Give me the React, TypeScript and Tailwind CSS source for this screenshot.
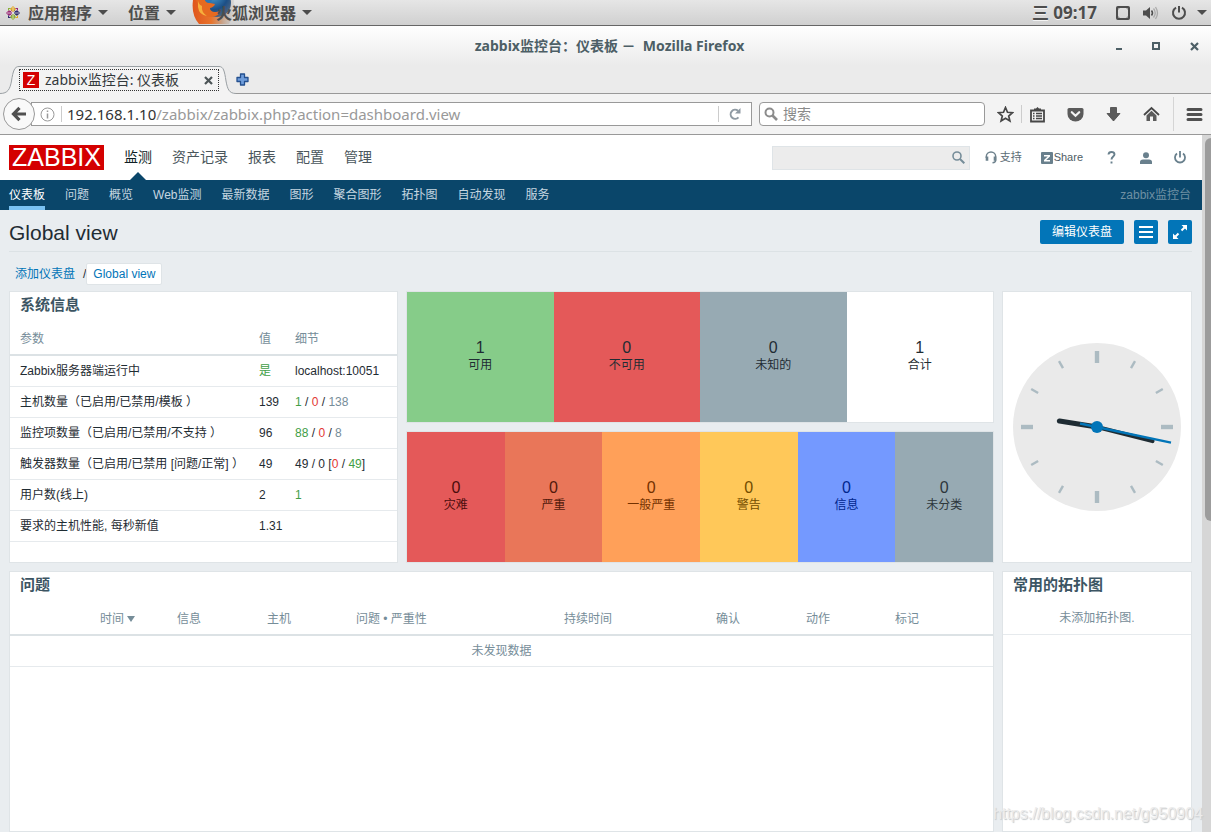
import type { ReactNode } from 'react';

const topMenus = ['资产记录', '报表', '配置', '管理'];
const subMenus = ['问题', '概览', 'Web监测', '最新数据', '图形', '聚合图形', '拓扑图', '自动发现', '服务'];

const hosts = [
  { count: 1, label: '可用', cls: 'bg-[#86cc89]' },
  { count: 0, label: '不可用', cls: 'bg-[#e45959]' },
  { count: 0, label: '未知的', cls: 'bg-[#97aab3]' },
  { count: 1, label: '合计', cls: 'bg-white' },
];

const severities = [
  { count: 0, label: '灾难', cls: 'bg-[#e45959] text-[#4b0c0c]' },
  { count: 0, label: '严重', cls: 'bg-[#e97659] text-[#52190b]' },
  { count: 0, label: '一般严重', cls: 'bg-[#ffa059] text-[#733100]' },
  { count: 0, label: '警告', cls: 'bg-[#ffc859] text-[#734d00]' },
  { count: 0, label: '信息', cls: 'bg-[#7499ff] text-[#00268e]' },
  { count: 0, label: '未分类', cls: 'bg-[#97aab3] text-[#2d363b]' },
];

export default function App() {
  return (
    <div className="flex h-screen flex-col overflow-hidden bg-[#f3f3f3] font-['Noto_Sans','Noto_Sans_CJK_SC',sans-serif]">
      <DesktopBar />
      <TitleBar />
      <TabStrip />
      <Toolbar />
      <div className="relative flex min-h-0 flex-1 bg-[#e9edf0] font-['Liberation_Sans','Noto_Sans_CJK_SC',sans-serif] text-xs text-[#1f2c33]">
        <div className="flex min-w-0 flex-1 flex-col">
          <SiteHeader />
          <SubNav />
          <Dashboard />
        </div>
        <div className="w-[9px] shrink-0 bg-[#d6d6d6] pt-[3px] pl-[3px]">
          <div className="h-[383px] rounded-l-full bg-[#9c9c9c]" />
        </div>
        <div className="pointer-events-none absolute right-2 bottom-2 text-base leading-5 text-[#ececec] [text-shadow:1px_1px_1px_#c4c8ca]">
          https://blog.csdn.net/g950904
        </div>
      </div>
    </div>
  );
}

function DesktopBar() {
  return (
    <div className="flex h-[26px] shrink-0 items-center overflow-hidden border-b border-[#666] bg-linear-to-b from-[#e6e6e6] to-[#d0d0d0] pr-1 pl-1.5 text-base leading-6 font-bold text-[#4d4d4d] [text-shadow:0_1px_0_#f4f4f4]">
      <button className="flex items-center">
        <CentosIcon />
        <span className="ml-2">应用程序</span>
        <Caret cls="ml-1.5" />
      </button>
      <button className="ml-5 flex items-center">
        位置
        <Caret cls="ml-1.5" />
      </button>
      <button className="ml-4 flex items-center">
        <FirefoxIcon />
        <span className="-ml-5">火狐浏览器</span>
        <Caret cls="ml-1.5" />
      </button>
      <div className="ml-auto flex items-center">
        <span className="text-[17px]">三 09:17</span>
        <svg className="ml-[18px]" width="16" height="16" viewBox="0 0 16 16" fill="none" stroke="#4d4d4d">
          <rect x="2" y="2" width="12" height="12" rx="1" strokeWidth="2" />
          <path d="M2.5 5V2.5H5M11 2.5h2.500V5M2.500 11v2.500H5M11 13.500h2.500V11" strokeWidth="1.500" />
        </svg>
        <svg className="ml-[11px]" width="17" height="16" viewBox="0 0 17 16" fill="none">
          <path d="M1 5.500h3L8 2v12L4 10.500H1z" fill="#4d4d4d" />
          <path d="M9.500 5.500q2 2.500 0 5" stroke="#4d4d4d" strokeWidth="1.500" />
          <path d="M11.500 3.500q3.500 4.500 0 9M13.500 2q4 6 0 12" stroke="#aaa" strokeWidth="1.300" />
        </svg>
        <svg className="ml-3" width="16" height="16" viewBox="0 0 16 16" fill="none" stroke="#4d4d4d" strokeWidth="2">
          <path d="M8 1v6.500M5 2.600a6 6 0 1 0 6 0" />
        </svg>
        <Caret cls="ml-2.5" />
      </div>
    </div>
  );
}

function TitleBar() {
  return (
    <div className="flex h-10 shrink-0 items-center bg-linear-to-b from-white to-[#ebebeb] text-[#4d5f66]">
      <div className="w-[95px]" />
      <div className="flex-1 pl-2 text-center text-sm leading-5 font-bold whitespace-pre">zabbix监控台：仪表板 －  Mozilla Firefox</div>
      <div className="flex w-[95px] items-center justify-between pr-3">
        <button aria-label="最小化" className="flex h-2 w-1.5 items-end"><i className="block h-0.5 w-full bg-[#4d5f66]" /></button>
        <button aria-label="最大化" className="size-2 border-2 border-[#4d5f66]" />
        <button aria-label="关闭">
          <svg width="9" height="9" viewBox="0 0 9 9" stroke="#4d5f66" strokeWidth="2.200"><path d="M1 1l7 7M8 1L1 8" /></svg>
        </button>
      </div>
    </div>
  );
}

function TabStrip() {
  return (
    <div className="flex h-7 shrink-0 bg-[#ebebeb]">
      <svg width="19" height="28" viewBox="0 0 19 28" className="shrink-0">
        <path d="M0 27.500C8 27.500 10 23 11.500 15C13 5 14.500 0.500 19 0.500V28H0Z" fill="#f3f3f3" />
        <path d="M0 27.500C8 27.500 10 23 11.500 15C13 5 14.500 0.500 19 0.500" fill="none" stroke="#999fa3" />
      </svg>
      <div className="w-[200px] border-t border-[#999fa3] bg-[#f3f3f3] pt-0.5">
        <div className="flex h-[22px] items-center border border-dotted border-[#333] px-[3px] text-sm text-[#33393c]">
          <span className="flex size-4 items-center justify-center bg-[#d40000] font-['Liberation_Sans',sans-serif] text-sm text-white">Z</span>
          <span className="ml-1.5 flex-1 leading-5 whitespace-nowrap">zabbix监控台: 仪表板</span>
          <button aria-label="关闭标签页" className="mr-0.5">
            <svg width="9" height="9" viewBox="0 0 9 9" stroke="#4d5557" strokeWidth="2.200"><path d="M1 1l7 7M8 1L1 8" /></svg>
          </button>
        </div>
      </div>
      <svg width="17" height="28" viewBox="0 0 17 28" className="shrink-0">
        <path d="M0 0.500C4.500 0.500 5.500 5 7 15C8.500 23 10 27.500 17 27.500V28H0Z" fill="#f3f3f3" />
        <path d="M0 0.500C4.500 0.500 5.500 5 7 15C8.500 23 10 27.500 17 27.500" fill="none" stroke="#999fa3" />
      </svg>
      <div className="flex flex-1 items-center border-b border-[#999]">
        <button aria-label="打开新标签页">
          <svg width="13" height="13" viewBox="0 0 13 13">
            <path d="M4.500 1h4v3.500H12v4H8.500V12h-4V8.500H1v-4h3.500z" fill="#6f9ddb" stroke="#24508f" strokeWidth="1.300" strokeLinejoin="round" />
          </svg>
        </button>
      </div>
    </div>
  );
}

function Toolbar() {
  return (
    <div className="flex h-[41px] shrink-0 items-center border-b border-[#999] pl-[3px] text-sm">
      <button aria-label="后退" className="z-10 flex size-8 shrink-0 items-center justify-center rounded-full border border-[#999] bg-[#f9f9f9]">
        <svg width="16" height="16" viewBox="0 0 16 16" fill="none" stroke="#505050" strokeWidth="3.200"><path d="M2.500 8H15M8.500 1.800L2.500 8l6 6.200" /></svg>
      </button>
      <div className="-ml-1 flex h-6 min-w-0 flex-1 items-center border border-[#999] bg-white pl-2">
        <svg className="shrink-0" width="15" height="15" viewBox="0 0 15 15" fill="none" stroke="#999">
          <circle cx="7.500" cy="7.500" r="6.500" /><path d="M7.500 6.500v5M7.500 3.500V5" strokeWidth="1.500" />
        </svg>
        <span className="ml-1.5 h-4 w-px bg-[#ccc]" />
        <span className="ml-[5px] flex-1 text-[15px] leading-5 text-[#999]">
          <span className="text-[#333]">192.168.1.10</span>/zabbix/zabbix.php?action=dashboard.view
        </span>
        <span className="h-4 w-px bg-[#ccc]" />
        <button aria-label="重新载入" className="px-2.5">
          <svg width="12" height="12" viewBox="0 0 12 12" fill="none">
            <path d="M9.500 9.300A4.500 4.500 0 1 1 9 2.800" stroke="#8f9aa3" strokeWidth="2" /><path d="M11.500 0v5.500H6z" fill="#8f9aa3" />
          </svg>
        </button>
      </div>
      <label className="ml-[7px] flex h-6 w-[226px] items-center rounded-sm border border-[#999] bg-white pl-1">
        <svg width="14" height="14" viewBox="0 0 14 14" fill="none" stroke="#8c8c8c"><circle cx="5.500" cy="5.500" r="4" strokeWidth="2" /><path d="M8.500 8.500l4.500 4.500" strokeWidth="2.600" /></svg>
        <input aria-label="搜索" placeholder="搜索" className="ml-[5px] w-0 flex-1 leading-5 outline-none placeholder:text-[#8a8a8a]" />
      </label>
      <div className="flex items-center pl-3">
        <IconButton label="加为书签">
          <path d="M8.500 1.500l2 4.800 5 .4-3.800 3.300 1.200 5-4.400-2.700L4.100 15l1.200-5L1.500 6.700l5-.4z" fill="none" stroke="#474747" strokeWidth="1.700" />
        </IconButton>
        <span className="mx-[7px] h-[18px] w-px bg-[#ccc]" />
        <IconButton label="书签">
          <path d="M2 4.500h13v11H2z" fill="none" stroke="#474747" strokeWidth="1.800" />
          <path d="M5 2.500h2L8.500 1 10 2.500h2V5H5z" fill="#474747" />
          <path d="M4 7.500h1.500M7 7.500h6M4 10h1.500M7 10h6M4 12.500h1.500M7 12.500h6" stroke="#474747" strokeWidth="1.300" />
        </IconButton>
        <span className="w-[21px]" />
        <IconButton label="Pocket">
          <path d="M2 2h13q1.500 0 1.500 1.500V8a8 7.500 0 0 1-16 0V3.500Q.5 2 2 2z" fill="#5b5b5b" />
          <path d="M4.800 6.200l3.700 3.600 3.700-3.600" fill="none" stroke="#f3f3f3" strokeWidth="2.200" strokeLinecap="round" />
        </IconButton>
        <span className="w-[21px]" />
        <IconButton label="下载">
          <path d="M5.500 1.500h6v6H15L8.500 15 2 7.500h3.500z" fill="#5b5b5b" stroke="#474747" strokeWidth=".8" />
        </IconButton>
        <span className="w-[21px]" />
        <IconButton label="主页">
          <path d="M1 9l7.500-7L16 9" fill="none" stroke="#474747" strokeWidth="1.800" />
          <path d="M3.500 9.500l5-4.700 5 4.700V15H10v-4.500H7V15H3.500z" fill="#5b5b5b" />
        </IconButton>
        <span className="mr-3 ml-[13px] h-[34px] w-px bg-[#d5d5d5]" />
        <IconButton label="菜单">
          <path d="M2 3.500h13M2 8.500h13M2 13.500h13" stroke="#505050" strokeWidth="3" strokeLinecap="round" />
        </IconButton>
        <span className="w-2" />
      </div>
    </div>
  );
}

function IconButton({ label, children }: { label: string; children: ReactNode }) {
  return (
    <button aria-label={label} className="shrink-0">
      <svg width="17" height="17" viewBox="0 0 17 17">{children}</svg>
    </button>
  );
}

function SiteHeader() {
  return (
    <header className="flex h-[45px] shrink-0 items-center bg-white pr-4 pl-[9px]">
      <a href="#" className="flex h-[25px] w-[95px] items-center justify-center bg-[#d40000] text-[25px] leading-[25px] text-white">ZABBIX</a>
      <nav className="ml-5 flex gap-5 self-stretch text-sm leading-[45px] text-[#4a565c]">
        <a href="#" className="relative text-[#0f1f26]">
          监测
          <svg className="absolute bottom-0 left-1.5" width="16" height="8" viewBox="0 0 16 8"><path d="M0 8l8-8 8 8z" fill="#0a466a" /></svg>
        </a>
        {topMenus.map((m) => <a key={m} href="#">{m}</a>)}
      </nav>
      <label className="ml-auto flex h-6 w-[198px] items-center border border-[#dfe4e7] bg-[#ececec] pr-1">
        <input aria-label="搜索主机" className="w-0 flex-1 px-1 outline-none" />
        <svg width="13" height="13" viewBox="0 0 13 13" fill="none" stroke="#768d99"><circle cx="5" cy="5" r="4" strokeWidth="1.600" /><path d="M8 8l4.300 4.300" strokeWidth="2" /></svg>
      </label>
      <a href="#" className="ml-[15px] flex items-center gap-[3px] text-[11px] text-[#5c6c75]">
        <svg width="12" height="13" viewBox="0 0 12 13" fill="none" stroke="#6e828d">
          <path d="M1.300 7V5.500a4.700 4.500 0 0 1 9.400 0V9q0 2.500-3.200 2.800" strokeWidth="1.400" />
          <path d="M2 5.500v4.200M10 5.500v4.200" strokeWidth="2.600" />
        </svg>
        支持
      </a>
      <a href="#" className="ml-[19px] flex items-center text-[11px] text-[#4f5d65]">
        <svg className="mr-px" width="12" height="12" viewBox="0 0 12 12"><rect width="12" height="12" rx="1" fill="#69808d" /><path d="M3 3h6v1.400L5.200 8H9v1.500H3V8.100l3.800-3.600H3z" fill="#fff" /></svg>
        Share
      </a>
      <a href="#" aria-label="帮助" className="ml-6">
        <svg width="9" height="13" viewBox="0 0 9 13" fill="none" stroke="#69808d" strokeWidth="1.900"><path d="M1.500 3.500Q1.700 1 4.500 1t3 2.300C7.500 5.500 4.500 5.500 4.500 8.500M4.500 10.500v2" /></svg>
      </a>
      <a href="#" aria-label="用户" className="ml-6">
        <svg width="12" height="12" viewBox="0 0 12 12" fill="#69808d"><circle cx="6" cy="3.300" r="3" /><path d="M0 12V9.800q0-2 3-2.300h6q3 .3 3 2.300V12z" /></svg>
      </a>
      <a href="#" aria-label="退出" className="ml-[22px]">
        <svg width="12" height="13" viewBox="0 0 12 13" fill="none" stroke="#69808d" strokeWidth="1.800"><path d="M6 0v6.500M3 2.500a5 5 0 1 0 6 0" /></svg>
      </a>
    </header>
  );
}

function SubNav() {
  return (
    <nav className="flex h-[30px] shrink-0 gap-5 bg-[#0a466a] pr-[11px] pl-[9px] leading-[30px] text-[#c6d6e0]">
      <a href="#" className="relative text-white">
        仪表板
        <i className="absolute inset-x-0 bottom-0 h-1 bg-[#7ac2f2]" />
      </a>
      {subMenus.map((m) => <a key={m} href="#">{m}</a>)}
      <span className="ml-auto text-[#6f90a3]">zabbix监控台</span>
    </nav>
  );
}

function Dashboard() {
  return (
    <main className="flex min-h-0 flex-1 flex-col pr-2.5 pl-[9px]">
      <div className="flex h-[42px] shrink-0 items-center border-b border-[#dce2e5] pt-1.5">
        <h1 className="flex-1 pb-0.5 text-[21px] leading-7">Global view</h1>
        <div className="flex gap-2.5 pb-1">
          <button className="h-6 w-[84px] rounded-xs bg-[#0275b8] text-white">编辑仪表盘</button>
          <button aria-label="操作" className="flex size-6 items-center justify-center rounded-xs bg-[#0275b8]">
            <svg width="14" height="12" viewBox="0 0 14 12" stroke="#fff" strokeWidth="2"><path d="M0 1h14M0 6h14M0 11h14" /></svg>
          </button>
          <button aria-label="全屏" className="flex size-6 items-center justify-center rounded-xs bg-[#0275b8]">
            <svg width="14" height="14" viewBox="0 0 14 14" fill="#fff" stroke="#fff"><path d="M8.500 5.500l3-3M5.500 8.500l-3 3" strokeWidth="2" /><path d="M8.500 0H14v5.500zM0 8.500V14h5.500z" stroke="none" /></svg>
          </button>
        </div>
      </div>
      <div className="mt-[11px] mb-1.5 flex h-[22px] shrink-0 items-center pl-1.5">
        <a href="#" className="text-[#0275b8]">添加仪表盘</a>
        <span className="ml-2">/</span>
        <a href="#" className="flex h-full items-center rounded-xs border border-[#dfe4e7] bg-white px-1.5 text-[#0275b8]">Global view</a>
      </div>
      <div className="grid min-h-0 flex-1 grid-cols-[389fr_588fr_190fr] grid-rows-[272px_minmax(0,1fr)] gap-2">
        <Widget title="系统信息"><SystemInfo /></Widget>
        <div className="grid grid-rows-2 gap-2">
          <div className="grid grid-cols-4 border border-[#dfe4e7]">
            {hosts.map((h) => <Tile key={h.label} {...h} />)}
          </div>
          <div className="grid grid-cols-6 border border-[#dfe4e7]">
            {severities.map((s) => <Tile key={s.label} {...s} />)}
          </div>
        </div>
        <section className="flex items-center justify-center border border-[#dfe4e7] bg-white"><Clock /></section>
        <div className="col-span-2 grid"><Widget title="问题"><Problems /></Widget></div>
        <Widget title="常用的拓扑图">
          <p className="h-8 border-b border-[#e6eaed] text-center leading-[31px] text-[#768d99]">未添加拓扑图.</p>
        </Widget>
      </div>
    </main>
  );
}

function Widget({ title, children }: { title: string; children: ReactNode }) {
  return (
    <section className="min-w-0 border border-[#dfe4e7] bg-white">
      <h4 className="px-2.5 pb-[5px] text-[15px] leading-[26px] font-bold text-[#3c5563] pt-[-1px]">{title}</h4>
      {children}
    </section>
  );
}

function Tile({ count, label, cls }: { count: number; label: string; cls: string }) {
  return (
    <div className={`flex flex-col items-center justify-center ${cls}`}>
      <span className="text-base leading-4">{count}</span>
      <span className="leading-[18px]">{label}</span>
    </div>
  );
}

const G = ({ children }: { children: ReactNode }) => <span className="text-[#429e47]">{children}</span>;
const R = ({ children }: { children: ReactNode }) => <span className="text-[#e33734]">{children}</span>;
const Gray = ({ children }: { children: ReactNode }) => <span className="text-[#768d99]">{children}</span>;

function SystemInfo() {
  const rows: [string, ReactNode, ReactNode][] = [
    ['Zabbix服务器端运行中', <G>是</G>, 'localhost:10051'],
    ['主机数量（已启用/已禁用/模板 ）', 139, <><G>1</G> / <R>0</R> / <Gray>138</Gray></>],
    ['监控项数量（已启用/已禁用/不支持 ）', 96, <><G>88</G> / <R>0</R> / <Gray>8</Gray></>],
    ['触发器数量（已启用/已禁用 [问题/正常] ）', 49, <>49 / 0 [<R>0</R> / <G>49</G>]</>],
    ['用户数(线上)', 2, <G>1</G>],
    ['要求的主机性能, 每秒新值', '1.31', ''],
  ];

  return (
    <table className="w-full table-fixed text-left whitespace-nowrap">
      <thead>
        <tr className="h-8 border-b-2 border-[#dce2e5] text-[#768d99]">
          <th className="pl-2.5 font-normal">参数</th>
          <th className="w-9 font-normal">值</th>
          <th className="w-[102px] font-normal">细节</th>
        </tr>
      </thead>
      <tbody>
        {rows.map(([name, value, detail]) => (
          <tr key={name} className="h-[31px] border-b border-[#e6eaed]">
            <td className="pl-2.5">{name}</td>
            <td>{value}</td>
            <td>{detail}</td>
          </tr>
        ))}
      </tbody>
    </table>
  );
}

function Problems() {
  return (
    <table className="w-full table-fixed text-left whitespace-nowrap text-[#768d99]">
      <thead>
        <tr className="h-8 border-b-2 border-[#dce2e5] *:font-normal">
          <th className="w-[90px]" />
          <th className="w-[77px]">时间 <svg className="inline" width="8" height="6" viewBox="0 0 8 6"><path d="M0 0h8L4 6z" fill="#768d99" /></svg></th>
          <th className="w-[90px]">信息</th>
          <th className="w-[89px]">主机</th>
          <th>问题 • 严重性</th>
          <th className="w-[152px]">持续时间</th>
          <th className="w-[90px]">确认</th>
          <th className="w-[89px]">动作</th>
          <th className="w-[98px]">标记</th>
        </tr>
      </thead>
      <tbody>
        <tr className="h-[31px] border-b border-[#e6eaed]">
          <td colSpan={9} className="text-center">未发现数据</td>
        </tr>
      </tbody>
    </table>
  );
}

function Clock() {
  return (
    <svg width="168" height="168" viewBox="-84 -84 168 168">
      <circle r="84" fill="#eaeaea" />
      {Array.from({ length: 12 }, (_, i) => (
        <path key={i} d={i % 3 ? 'M0 -76V-68' : 'M0 -76V-64'} strokeWidth={i % 3 ? 2.4 : 4.4} stroke="#acbbc2" transform={`rotate(${i * 30})`} />
      ))}
      <path d="M0 0L-37.500 -6" stroke="#1f2c33" strokeWidth="5.200" strokeLinecap="round" />
      <path d="M0 0L55.500 14" stroke="#1f2c33" strokeWidth="4.200" strokeLinecap="round" />
      <path d="M-17 -3.500L74 15.700" stroke="#0275b8" strokeWidth="2.400" />
      <circle r="6" fill="#0275b8" />
    </svg>
  );
}

function Caret({ cls }: { cls: string }) {
  return <svg className={cls} width="10" height="5" viewBox="0 0 10 5"><path d="M0 0h10L5 5z" fill="#4d4d4d" /></svg>;
}

function CentosIcon() {
  return (
    <svg width="14" height="14" viewBox="0 0 14 14">
      <path d="M7 0l2.500 2.500v3L7 7 4.500 5.500v-3z" fill="#e0a928" />
      <path d="M14 7l-2.500 2.500h-3L7 7l1.500-2.500h3z" fill="#2f2b6e" />
      <path d="M7 14l-2.500-2.500v-3L7 7l2.500 1.500v3z" fill="#8cae3a" />
      <path d="M0 7l2.500-2.500h3L7 7 5.500 9.500h-3z" fill="#9b2b78" />
      <path d="M2 2h3l-3 3z" fill="#8cae3a" />
      <path d="M12 2v3L9 2z" fill="#9b2b78" />
      <path d="M12 12H9l3-3z" fill="#e0a928" />
      <path d="M2 12V9l3 3z" fill="#2f2b6e" />
      <path d="M7 1v12M1 7h12M3 3l8 8M11 3l-8 8" stroke="#ececec" strokeWidth=".7" />
    </svg>
  );
}

function FirefoxIcon() {
  return (
    <svg width="44" height="25" viewBox="0 0 44 25" className="shrink-0">
      <defs>
        <linearGradient id="fox" x1="0" y1="0" x2="1" y2="0">
          <stop offset="0" stopColor="#e0561c" />
          <stop offset=".45" stopColor="#e8742c" />
          <stop offset=".7" stopColor="#c9a084" />
          <stop offset="1" stopColor="#bdbdbd" stopOpacity=".3" />
        </linearGradient>
        <radialGradient id="globe" cx=".35" cy=".2" r=".9">
          <stop offset="0" stopColor="#4aa3d8" />
          <stop offset=".6" stopColor="#1c4f86" />
          <stop offset="1" stopColor="#5b6b80" />
        </radialGradient>
      </defs>
      <path d="M1 0Q-1 15 7 24h30q6-8 5-24z" fill="url(#fox)" />
      <ellipse cx="25" cy="3" rx="14" ry="14" fill="url(#globe)" />
      <path d="M4 0h9q1 3 5 3l5 1q-1 3-5 4 0 3 4 4 5 0 7-2-2 7-10 7-8 0-11-8Q6 4 4 0z" fill="#e66a20" />
      <path d="M6 1q1 4 4 5-1 6 5 10-8-1-9-9z" fill="#f7b03c" />
      <path d="M13 0h7l-2 3q-4 0-5-3z" fill="#2d76b4" />
    </svg>
  );
}
